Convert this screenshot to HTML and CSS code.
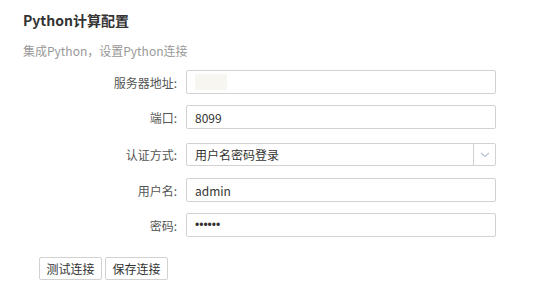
FILE: index.html
```html
<!DOCTYPE html>
<html>
<head>
<meta charset="utf-8">
<link rel="stylesheet" href="styles.css">
</head>
<body>
<div class="page">
  <h1 class="title">Python计算配置</h1>
  <p class="subtitle">集成Python，设置Python连接</p>
  <form class="form">
    <div class="row">
      <label class="label">服务器地址:</label>
      <div class="input"><span class="masked"></span></div>
    </div>
    <div class="row">
      <label class="label">端口:</label>
      <div class="input">8099</div>
    </div>
    <div class="row row-select">
      <label class="label">认证方式:</label>
      <div class="input select">
        <span class="select-text">用户名密码登录</span>
        <span class="select-arrow">
          <svg width="10" height="6" viewBox="0 0 10 6"><path d="M1 1l4 3.5L9 1" fill="none" stroke="#b8c4d6" stroke-width="1.2"/></svg>
        </span>
      </div>
    </div>
    <div class="row">
      <label class="label">用户名:</label>
      <div class="input">admin</div>
    </div>
    <div class="row">
      <label class="label">密码:</label>
      <div class="input pwd">••••••</div>
    </div>
  </form>
  <div class="actions">
    <button class="btn" type="button">测试连接</button>
    <button class="btn" type="button">保存连接</button>
  </div>
</div>
</body>
</html>
```
FILE: styles.css
```css
* { box-sizing: border-box; }
html, body { margin: 0; padding: 0; background: #fff; }
body {
  font-family: "Noto Sans CJK SC", "Noto Sans", "Liberation Sans", sans-serif;
  font-size: 12px;
  color: #333;
}
.page { padding: 0 0 0 23px; width: 556px; height: 299px; overflow: hidden; }
.title {
  margin: 0;
  padding-top: 10px;
  font-size: 14px;
  font-weight: bold;
  line-height: 20px;
  color: #333;
}
.subtitle {
  margin: 0;
  padding-top: 12px;
  font-size: 12px;
  line-height: 18px;
  color: #999;
}
.form { display: flex; flex-direction: column; margin-top: 10px; }
.row { display: flex; align-items: center; margin-bottom: 11px; }
.row-select { margin-top: 3px; margin-bottom: 12px; }
.label {
  width: 163px;
  text-align: right;
  padding-right: 9px;
  color: #555;
  font-size: 12px;
}
.input {
  width: 310px;
  height: 24px;
  border: 1px solid #d2d2d2;
  border-radius: 2px;
  padding: 0 8px;
  display: flex;
  align-items: center;
  color: #333;
  font-size: 12px;
}
.select { padding-right: 0; height: 23px; }
.select-text { flex: 1; }
.select-arrow {
  width: 22px;
  height: 100%;
  border-left: 1px solid #d2d2d2;
  display: flex;
  align-items: center;
  justify-content: center;
}
.masked { display: block; width: 32px; height: 16px; background: #f7f6f1; }
.pwd { font-family: "Liberation Sans", sans-serif; font-size: 12px; letter-spacing: 0; }
.actions { display: flex; gap: 3px; margin-top: 9px; padding-left: 16px; }
.btn {
  width: 63px;
  height: 23px;
  border: 1px solid #d2d2d2;
  border-radius: 2px;
  background: #fff;
  color: #333;
  font-family: inherit;
  font-size: 12px;
  padding: 0;
}
```
